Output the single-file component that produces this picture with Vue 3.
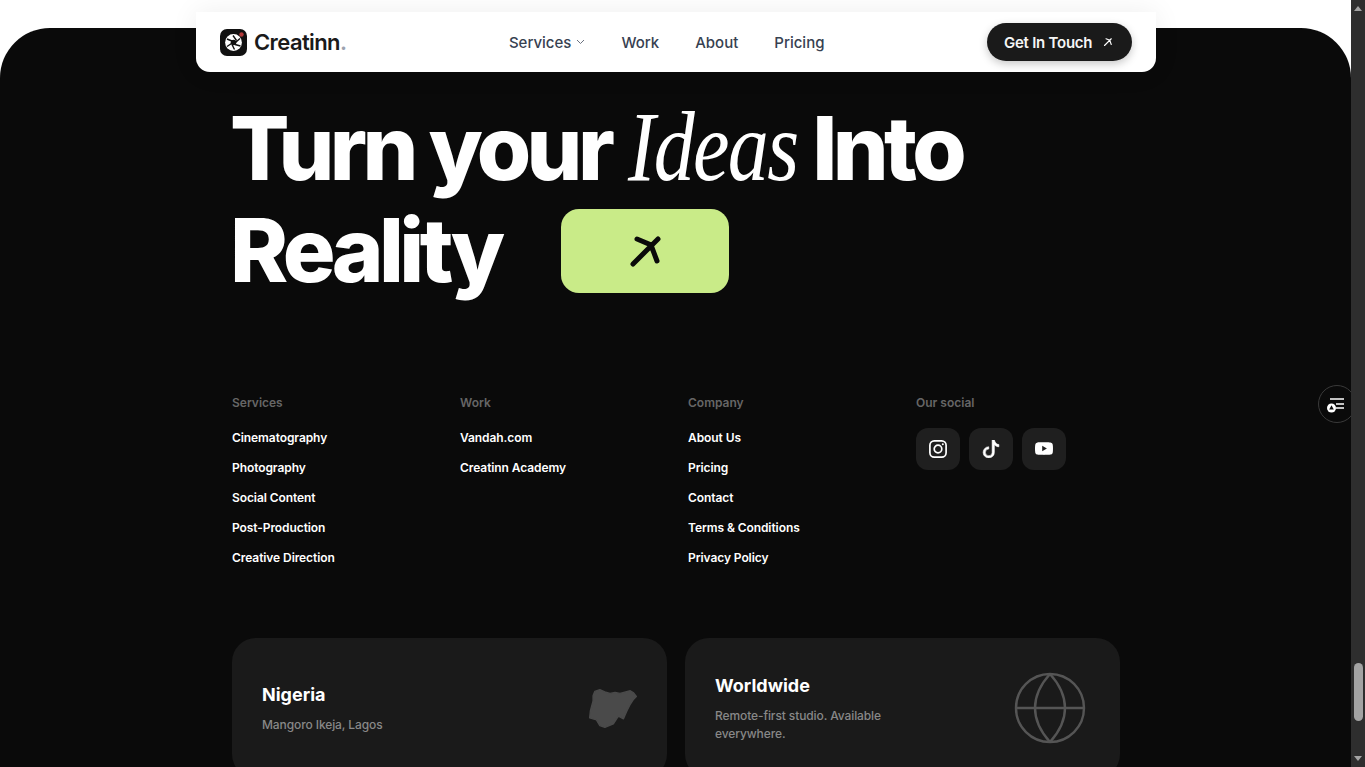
<script setup>
const columns = [
  { title: 'Services', links: ['Cinematography', 'Photography', 'Social Content', 'Post-Production', 'Creative Direction'] },
  { title: 'Work', links: ['Vandah.com', 'Creatinn Academy'] },
  { title: 'Company', links: ['About Us', 'Pricing', 'Contact', 'Terms & Conditions', 'Privacy Policy'] }
]
const navLinks = ['Work', 'About', 'Pricing']
</script>

<template>
  <div class="page">
    <main class="main">
      <!-- top nav, floats over the footer -->
      <header class="nav">
        <a class="logo">
          <span class="logo-mark">
            <svg width="27" height="27" viewBox="0 0 27 27">
              <circle cx="13.5" cy="13.5" r="8.4" fill="#fff" />
              <circle cx="13.5" cy="13.5" r="2.8" fill="#111" />
              <path d="M13 6.5 16.5 11.5M20 9.5 15.5 13.5M20.5 17 15 15.5M14.5 20.5 12 15.5M7 17.5 11.5 14.5M7 10 12 12" stroke="#111" stroke-width="1.4" fill="none" />
              <circle cx="21.5" cy="5.5" r="2.2" fill="#b23a3a" />
            </svg>
          </span>
          <span class="logo-text">Creatinn<i>.</i></span>
        </a>
        <nav class="nav-links">
          <a class="nav-link">
            Services
            <svg width="9" height="6" viewBox="0 0 9 6"><path d="M1 1l3.5 3.5L8 1" fill="none" stroke="#6b7280" stroke-width="1" /></svg>
          </a>
          <a v-for="l in navLinks" :key="l" class="nav-link">{{ l }}</a>
        </nav>
        <button class="cta">
          Get In Touch
          <svg width="10" height="10" viewBox="0 0 40 40"><path d="M6 34 33 7M12 7l15 6 6 17" fill="none" stroke="#fff" stroke-width="4.5" stroke-linecap="round" /></svg>
        </button>
      </header>

      <footer class="footer">
        <h1 class="headline">
          <span class="line">Turn your <em>Ideas</em> Into</span>
          <span class="line second">
            Reality
            <span class="go">
              <svg width="40" height="40" viewBox="0 0 40 40"><path d="M8 33 33 8M12 8l14 6 6 16" fill="none" stroke="#0a0a0a" stroke-width="5" stroke-linecap="round" /></svg>
            </span>
          </span>
        </h1>

        <div class="cols">
          <div v-for="c in columns" :key="c.title" class="col">
            <h4>{{ c.title }}</h4>
            <a v-for="l in c.links" :key="l">{{ l }}</a>
          </div>
          <div class="col">
            <h4>Our social</h4>
            <div class="socials">
              <span class="social">
                <svg width="20" height="20" viewBox="0 0 20 20" fill="none" stroke="#fff" stroke-width="1.7">
                  <rect x="1.9" y="1.9" width="16.2" height="16.2" rx="4.4" />
                  <circle cx="10" cy="10" r="3.8" />
                  <circle cx="14.8" cy="5.2" r="1" fill="#fff" stroke="none" />
                </svg>
              </span>
              <span class="social">
                <svg width="18" height="18" viewBox="0 0 16 16" fill="#fff"><path d="M9 0h1.98c.144.715.54 1.617 1.235 2.512C12.895 3.389 13.797 4 15 4v2c-1.753 0-3.07-.814-4-1.829V11a5 5 0 1 1-5-5v2a3 3 0 1 0 3 3z" stroke="#fff" stroke-width=".5" /></svg>
              </span>
              <span class="social">
                <svg width="18" height="18" viewBox="0 0 16 16" fill="#fff"><path d="M8.051 1.999h.089c.822.003 4.987.033 6.11.335a2.01 2.01 0 0 1 1.415 1.42c.101.38.172.883.22 1.402l.01.104.022.26.008.104c.065.914.073 1.77.074 1.957v.075c-.001.194-.01 1.108-.082 2.06l-.008.105-.009.104c-.05.572-.124 1.14-.235 1.558a2.007 2.007 0 0 1-1.415 1.42c-1.16.312-5.569.334-6.18.335h-.142c-.309 0-1.587-.006-2.927-.052l-.17-.006-.087-.004-.171-.007-.171-.007c-1.11-.049-2.167-.128-2.654-.26a2.007 2.007 0 0 1-1.415-1.419c-.111-.417-.185-.986-.235-1.558L.09 9.82l-.008-.104A31.4 31.4 0 0 1 0 7.68v-.123c.002-.215.01-.958.064-1.778l.007-.103.003-.052.008-.104.022-.26.01-.104c.048-.519.119-1.023.22-1.402a2.007 2.007 0 0 1 1.415-1.42c.487-.13 1.544-.21 2.654-.26l.17-.007.172-.006.086-.003.171-.007A99.788 99.788 0 0 1 7.858 2h.193zM6.4 5.209v4.818l4.157-2.408L6.4 5.209z" /></svg>
              </span>
            </div>
          </div>
        </div>

        <div class="cards">
          <div class="card">
            <div>
              <h3>Nigeria</h3>
              <p>Mangoro Ikeja, Lagos</p>
            </div>
            <svg width="48" height="39" viewBox="28 25 142 115">
              <path fill="#4a4a4a" stroke="#4a4a4a" stroke-width="4" stroke-linejoin="round" d="M45 32 60 27 75 33 90 38 105 35 120 38 150 30 160 36 168 47 160 55 150 70 140 90 130 113 115 105 100 128 75 138 60 133 50 116 30 110 32 90 40 60 40 45Z" />
            </svg>
          </div>
          <div class="card">
            <div class="card-text">
              <h3>Worldwide</h3>
              <p>Remote-first studio. Available everywhere.</p>
            </div>
            <svg class="globe" width="72" height="72" viewBox="0 0 72 72" fill="none" stroke="#555" stroke-width="2.4">
              <circle cx="36" cy="36" r="34" />
              <path d="M2 36h68M36 2c-20 22-20 46 0 68M36 2c20 22 20 46 0 68" />
            </svg>
          </div>
        </div>
      </footer>

      <!-- round widget on the right edge -->
      <span class="widget">
        <svg width="20" height="17" viewBox="0 0 20 17">
          <path d="M3 3h14M9 8h8M9 12h8" stroke="#fff" stroke-width="1.4" fill="none" />
          <circle cx="4.5" cy="12" r="4.5" fill="#fff" />
          <path d="M4.5 9.2l2.3 4.4H2.2z" fill="#0a0a0a" />
        </svg>
      </span>
    </main>

    <!-- dark browser scrollbar -->
    <aside class="scrollbar">
      <span class="arrow up"></span>
      <span class="thumb"></span>
      <span class="arrow down"></span>
    </aside>
  </div>
</template>

<style>
html, body {
  margin: 0;
  background: #fff;
  overflow: hidden;
}
</style>

<style scoped>
.page {
  display: flex;
  height: 767px;
  overflow: hidden;
  font-family: Inter, "Liberation Sans", sans-serif;
}

.main {
  position: relative;
  flex: 1;
  overflow: hidden;
  background: #fff;
}

.nav {
  position: absolute;
  top: 12px;
  left: 196px;
  z-index: 2;
  box-sizing: border-box;
  display: flex;
  align-items: center;
  justify-content: space-between;
  width: 960px;
  height: 60px;
  padding: 0 24px;
  background: #fff;
  border-radius: 0 0 14px 14px;
  box-shadow: 0 0 28px rgba(0, 0, 0, 0.07);
}

.logo {
  display: flex;
  align-items: center;
  gap: 7px;
}

.logo-mark {
  display: flex;
  width: 27px;
  height: 27px;
  background: #111;
  border-radius: 7px;
}

.logo-text {
  font-size: 22px;
  font-weight: 600;
  letter-spacing: -0.6px;
  color: #1a1a1a;
}

.logo-text i {
  font-style: normal;
  color: #9ca3af;
}

.nav-links {
  display: flex;
  gap: 36px;
}

.nav-link {
  display: flex;
  align-items: center;
  gap: 5px;
  font-size: 15px;
  font-weight: 500;
  color: #374151;
}

.cta {
  display: flex;
  align-items: center;
  gap: 11px;
  box-sizing: border-box;
  width: 145px;
  height: 38px;
  padding: 0 0 0 17px;
  border: none;
  border-radius: 19px;
  background: #1a1a1a;
  color: #f5f5f5;
  font-family: inherit;
  font-size: 15px;
  font-weight: 600;
  letter-spacing: -0.25px;
  box-shadow: 0 3px 8px rgba(0, 0, 0, 0.22);
}

.footer {
  box-sizing: border-box;
  height: 739px;
  margin-top: 28px;
  padding: 69px 231px 0 232px;
  background: #0a0a0a;
  border-radius: 50px 50px 0 0;
}

.headline {
  margin: 0 0 0 -2px;
  font-size: 88px;
  font-weight: 800;
  line-height: 102px;
  letter-spacing: -4.6px;
  color: #fff;
}

.headline em {
  display: inline-block;
  margin-left: 3px;
  margin-right: -37px;
  font-family: "Liberation Serif", serif;
  font-size: 100px;
  font-weight: 400;
  line-height: 0;
  letter-spacing: -2px;
  transform: scaleX(0.82);
  transform-origin: left center;
}

.line {
  display: block;
  white-space: nowrap;
}

.second {
  display: flex;
  align-items: center;
  gap: 60px;
}

.go {
  display: flex;
  align-items: center;
  justify-content: center;
  width: 168px;
  height: 84px;
  margin-top: 2px;
  border-radius: 18px;
  background: #c9eb88;
}

.cols {
  display: grid;
  grid-template-columns: repeat(4, 204px);
  gap: 24px;
  margin-top: 92px;
}

.col {
  display: flex;
  flex-direction: column;
  align-items: flex-start;
}

.col h4 {
  margin: 0 0 10px;
  font-size: 12px;
  font-weight: 600;
  line-height: 20px;
  color: #666;
}

.col a {
  height: 30px;
  font-size: 12px;
  font-weight: 600;
  line-height: 30px;
  letter-spacing: -0.08px;
  color: #fff;
}

.socials {
  display: flex;
  gap: 9px;
  margin-top: 5px;
}

.social {
  display: flex;
  align-items: center;
  justify-content: center;
  width: 44px;
  height: 42px;
  border-radius: 12px;
  background: #1f1f1f;
}

.cards {
  display: grid;
  grid-template-columns: repeat(2, 435px);
  gap: 18px;
  margin-top: 65px;
}

.card {
  box-sizing: border-box;
  display: flex;
  align-items: center;
  justify-content: space-between;
  height: 140px;
  padding: 0 30px;
  border-radius: 24px;
  background: #1a1a1a;
}

.card h3 {
  margin: 0 0 8px;
  font-size: 18px;
  font-weight: 700;
  line-height: 26px;
  color: #fff;
}

.card p {
  margin: 0;
  font-size: 12px;
  font-weight: 500;
  line-height: 18px;
  letter-spacing: -0.1px;
  color: #888;
}

.card-text {
  width: 200px;
}

.globe {
  margin-right: 4px;
}

.widget {
  position: absolute;
  top: 385px;
  left: 1318px;
  display: flex;
  align-items: center;
  justify-content: center;
  box-sizing: border-box;
  width: 38px;
  height: 38px;
  border: 1px solid #3a3a3a;
  border-radius: 50%;
  background: #0a0a0a;
}

.scrollbar {
  position: relative;
  width: 14px;
  background: #2e2e2e;
}

.thumb {
  position: absolute;
  top: 663px;
  left: 3px;
  width: 9px;
  height: 58px;
  border-radius: 5px;
  background: #a3a3a3;
}

.arrow {
  position: absolute;
  left: 3px;
  width: 0;
  height: 0;
  border-left: 4px solid transparent;
  border-right: 4px solid transparent;
}

.arrow.up {
  top: 6px;
  border-bottom: 5px solid #a3a3a3;
}

.arrow.down {
  top: 756px;
  border-top: 5px solid #a3a3a3;
}
</style>
